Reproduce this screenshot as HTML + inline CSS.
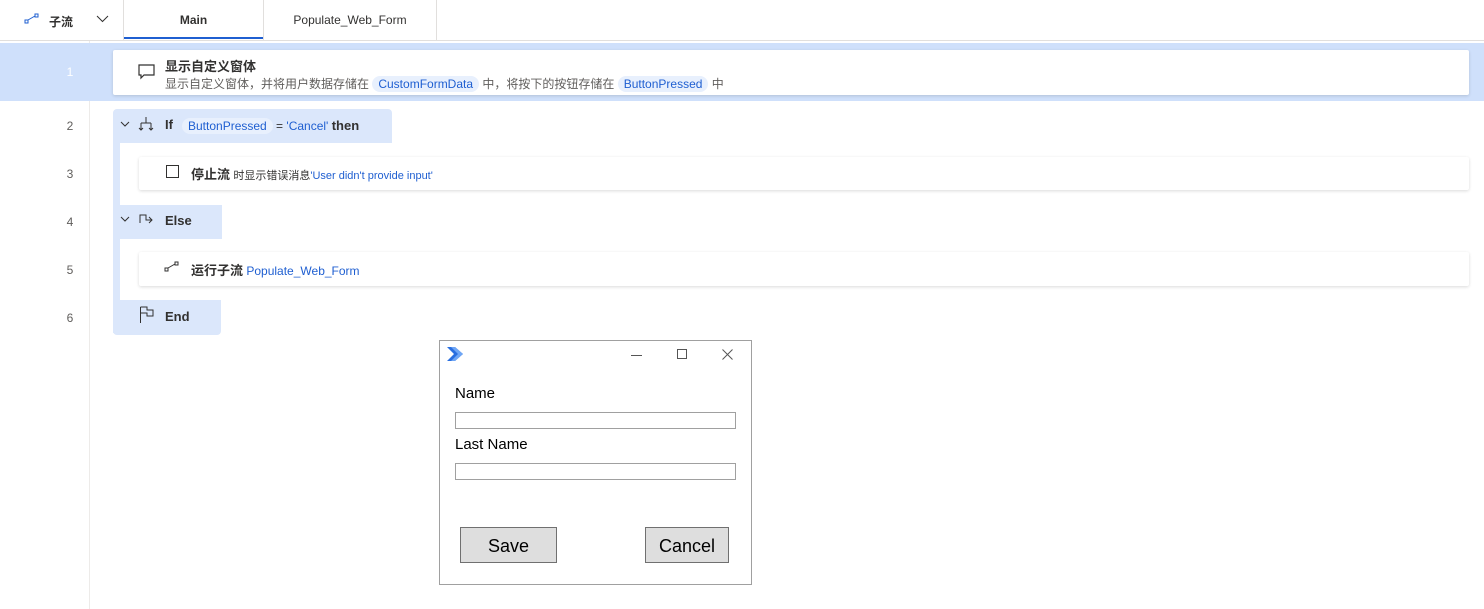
<!DOCTYPE html>
<html><head><meta charset="utf-8"><style>
*{box-sizing:border-box;margin:0;padding:0}
body{width:1484px;height:609px;background:#fff;font-family:"Segoe UI","Liberation Sans","Noto Sans CJK SC",sans-serif;color:#323130;position:relative;overflow:hidden;font-size:12px}
.abs{position:absolute}
.hdr{left:0;top:0;width:1484px;height:41px;border-bottom:1px solid #e1dfdd}
.gut{left:89px;top:41px;width:1px;height:568px;background:#edebe9}
.num{position:absolute;left:55px;width:30px;text-align:center;font-size:12px;color:#605e5c}
.card{position:absolute;background:#fff;box-shadow:0 1px 3px rgba(0,0,0,.15);border-radius:2px}
.blk{position:absolute;background:#dbe7fb}
.b{font-weight:bold;font-size:13px;color:#323130}
.v{background:#e8f0fd;color:#1f5fd1;border-radius:9px;padding:1px 6px;font-size:12px}
.blue{color:#1f5fd1}
.t{position:absolute;white-space:nowrap}
</style></head><body>
<div class="abs hdr"></div>
<svg class="abs" style="left:24px;top:13px" width="16" height="12" viewBox="0 0 16 12"><rect x="1" y="7" width="3" height="3" fill="none" stroke="#1f5fd1"/><rect x="11" y="1" width="3" height="3" fill="none" stroke="#1f5fd1"/><path d="M4 7 L11 3" stroke="#1f5fd1"/></svg>
<div class="t" style="left:49px;top:13px;font-weight:bold;font-size:12px">子流</div>
<svg class="abs" style="left:96px;top:15px" width="13" height="8"><path d="M1 1 L6.5 6.5 L12 1" fill="none" stroke="#323130"/></svg>
<div class="abs" style="left:123px;top:0;width:1px;height:40px;background:#e1dfdd"></div>
<div class="abs" style="left:263px;top:0;width:1px;height:40px;background:#e1dfdd"></div>
<div class="abs" style="left:436px;top:0;width:1px;height:40px;background:#e1dfdd"></div>
<div class="t" style="left:124px;top:13px;width:139px;text-align:center;font-weight:bold;font-size:12px">Main</div>
<div class="abs" style="left:124px;top:37px;width:139px;height:2px;background:#1f5fd1"></div>
<div class="t" style="left:264px;top:13px;width:172px;text-align:center;font-size:12px">Populate_Web_Form</div>
<div class="abs gut"></div>
<div class="abs" style="left:0;top:43px;width:1484px;height:58px;background:#cfe0fb"></div>
<div class="num" style="top:65px;color:#fff">1</div>
<div class="card" style="left:113px;top:50px;width:1356px;height:45px"></div>
<svg class="abs" style="left:138px;top:64px" width="18" height="16"><path d="M1 1 H16 V11 H6 L3 14 V11 H1 Z" fill="none" stroke="#323130" stroke-width="1.2"/></svg>
<div class="t b" style="left:165px;top:56px">显示自定义窗体</div>
<div class="t" style="left:165px;top:75px;color:#605e5c">显示自定义窗体，并将用户数据存储在 <span class="v">CustomFormData</span> 中，将按下的按钮存储在 <span class="v">ButtonPressed</span> 中</div>
<div class="num" style="top:119px">2</div><div class="num" style="top:167px">3</div><div class="num" style="top:215px">4</div><div class="num" style="top:263px">5</div><div class="num" style="top:311px">6</div>
<div class="blk" style="left:113px;top:109px;width:279px;height:34px;border-radius:4px 4px 0 0"></div>
<div class="blk" style="left:113px;top:143px;width:7px;height:190px"></div>
<div class="blk" style="left:113px;top:205px;width:109px;height:34px"></div>
<div class="blk" style="left:113px;top:300px;width:108px;height:35px;border-radius:0 0 4px 4px"></div>
<svg class="abs" style="left:120px;top:121px" width="10" height="7"><path d="M1 1 L5 5 L9 1" fill="none" stroke="#323130"/></svg>
<svg class="abs" style="left:138px;top:116px" width="16" height="16"><path d="M8 1 V7 M3 7 H13 M3 7 V14 M13 7 V14 M1 12 L3 14 L5 12 M11 12 L13 14 L15 12" fill="none" stroke="#323130"/></svg>
<div class="t b" style="left:165px;top:117px">If</div>
<div class="t" style="left:182px;top:118px"><span class="v">ButtonPressed</span> = <span class="blue">'Cancel'</span> <b style="font-size:13px">then</b></div>
<div class="card" style="left:139px;top:157px;width:1330px;height:33px"></div>
<div class="abs" style="left:166px;top:165px;width:13px;height:13px;border:1.3px solid #323130"></div>
<div class="t" style="left:191px;top:164px"><b style="font-size:13px">停止流</b> <span style="font-size:11px">时显示错误消息</span><span class="blue" style="font-size:11px">'User didn't provide input'</span></div>
<svg class="abs" style="left:120px;top:216px" width="10" height="7"><path d="M1 1 L5 5 L9 1" fill="none" stroke="#323130"/></svg>
<svg class="abs" style="left:138px;top:213px" width="16" height="14"><path d="M2 10 V2 H8 V7 H14 M11 4 L14 7 L11 10" fill="none" stroke="#323130"/></svg>
<div class="t b" style="left:165px;top:213px">Else</div>
<div class="card" style="left:139px;top:252px;width:1330px;height:34px"></div>
<svg class="abs" style="left:164px;top:261px" width="16" height="12"><rect x="1" y="7" width="3" height="3" fill="none" stroke="#323130"/><rect x="11" y="1" width="3" height="3" fill="none" stroke="#323130"/><path d="M4 7 L11 3" stroke="#323130"/></svg>
<div class="t" style="left:191px;top:260px"><b style="font-size:13px">运行子流</b> <span class="blue">Populate_Web_Form</span></div>
<svg class="abs" style="left:139px;top:306px" width="16" height="18"><path d="M1.5 1 V17 M1.5 1 H8 V4 H14 V10 H8 V7 H1.5" fill="none" stroke="#323130"/></svg>
<div class="t b" style="left:165px;top:309px">End</div>
<div class="abs" style="left:439px;top:340px;width:313px;height:245px;border:1px solid #a0a0a0;background:#fff"></div>
<svg class="abs" style="left:447px;top:347px" width="17" height="14"><path d="M0 0 H8 L16 7 L8 14 H0 L7 7 Z" fill="#2a6fe0"/><path d="M8 0 L16 7 L8 14 H4 L11 7 L4 0Z" fill="#6fa6f5"/></svg>
<div class="abs" style="left:631px;top:355px;width:11px;height:1px;background:#555"></div>
<div class="abs" style="left:677px;top:349px;width:10px;height:10px;border:1px solid #555"></div>
<svg class="abs" style="left:722px;top:349px" width="11" height="11"><path d="M0.5 0.5 L10.5 10.5 M10.5 0.5 L0.5 10.5" stroke="#555"/></svg>
<div class="t" style="left:455px;top:385px;font-size:15px;color:#000">Name</div>
<div class="abs" style="left:455px;top:412px;width:281px;height:17px;border:1px solid #a0a0a0"></div>
<div class="t" style="left:455px;top:436px;font-size:15px;color:#000">Last Name</div>
<div class="abs" style="left:455px;top:463px;width:281px;height:17px;border:1px solid #a0a0a0"></div>
<div class="abs" style="left:460px;top:527px;width:97px;height:36px;border:1px solid #707070;background:#dedede;font-size:18px;color:#000;text-align:center;line-height:36px">Save</div>
<div class="abs" style="left:645px;top:527px;width:84px;height:36px;border:1px solid #707070;background:#dedede;font-size:18px;color:#000;text-align:center;line-height:36px">Cancel</div>
</body></html>
